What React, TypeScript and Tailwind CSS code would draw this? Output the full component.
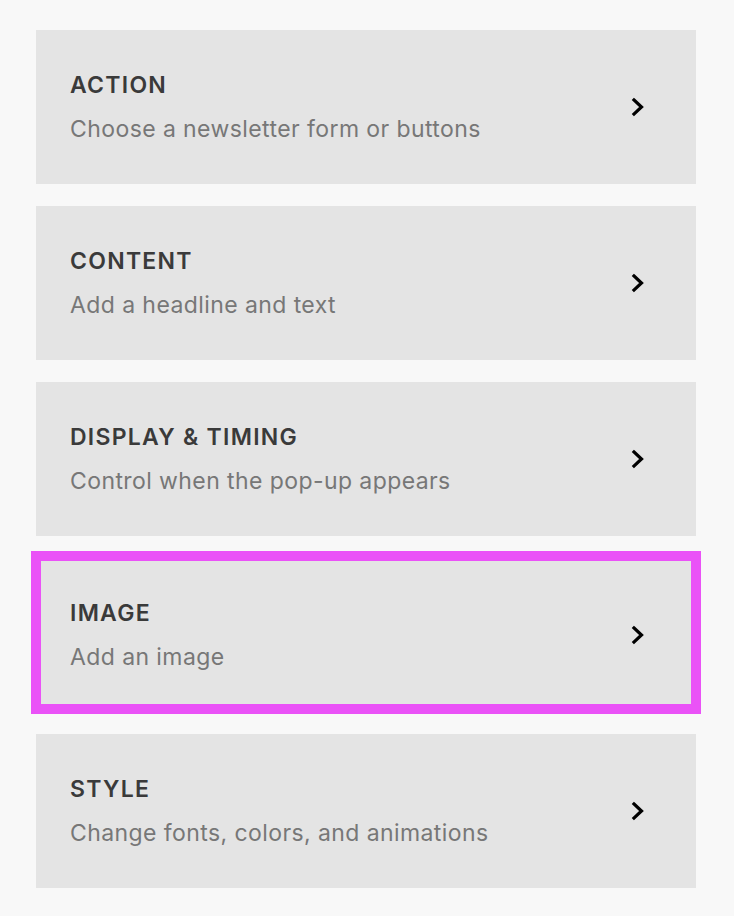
const SECTIONS = [
  { title: "ACTION", description: "Choose a newsletter form or buttons" },
  { title: "CONTENT", description: "Add a headline and text" },
  { title: "DISPLAY & TIMING", description: "Control when the pop-up appears" },
  { title: "IMAGE", description: "Add an image", selected: true },
  { title: "STYLE", description: "Change fonts, colors, and animations" },
];

function Chevron() {
  return (
    <svg width="14" height="20" viewBox="0 0 14 20" fill="none" className="shrink-0">
      <path d="M3 3 L10.5 10 L3 17" stroke="#000" strokeWidth="3.2" strokeLinecap="square" strokeLinejoin="miter" />
    </svg>
  );
}

export default function App() {
  return (
    <div
      className="min-h-[916px] w-full bg-[#f8f8f8] pl-[36px] pr-[38px] pt-[30px]"
      style={{ fontFamily: 'Inter, "Liberation Sans", Arial, sans-serif' }}
    >
      <div className="flex flex-col gap-[22px]">
        {SECTIONS.map((s) => (
          <div
            key={s.title}
            className="relative flex h-[154px] items-center justify-between bg-[#e4e4e4] pl-[34px] pr-[51px]"
          >
            <div className="flex flex-col">
              <span className="text-[23px] leading-[28px] font-semibold tracking-[0.055em] text-[#3a3a3a]">
                {s.title}
              </span>
              <span className="mt-[16px] text-[23px] leading-[28px] tracking-[0.018em] text-[#777777]">
                {s.description}
              </span>
            </div>
            <Chevron />
            {s.selected && (
              <div className="pointer-events-none absolute -top-[7px] -left-[5px] -right-[5px] -bottom-[2px] border-[10px] border-[#ea52f7]" />
            )}
          </div>
        ))}
      </div>
    </div>
  );
}
